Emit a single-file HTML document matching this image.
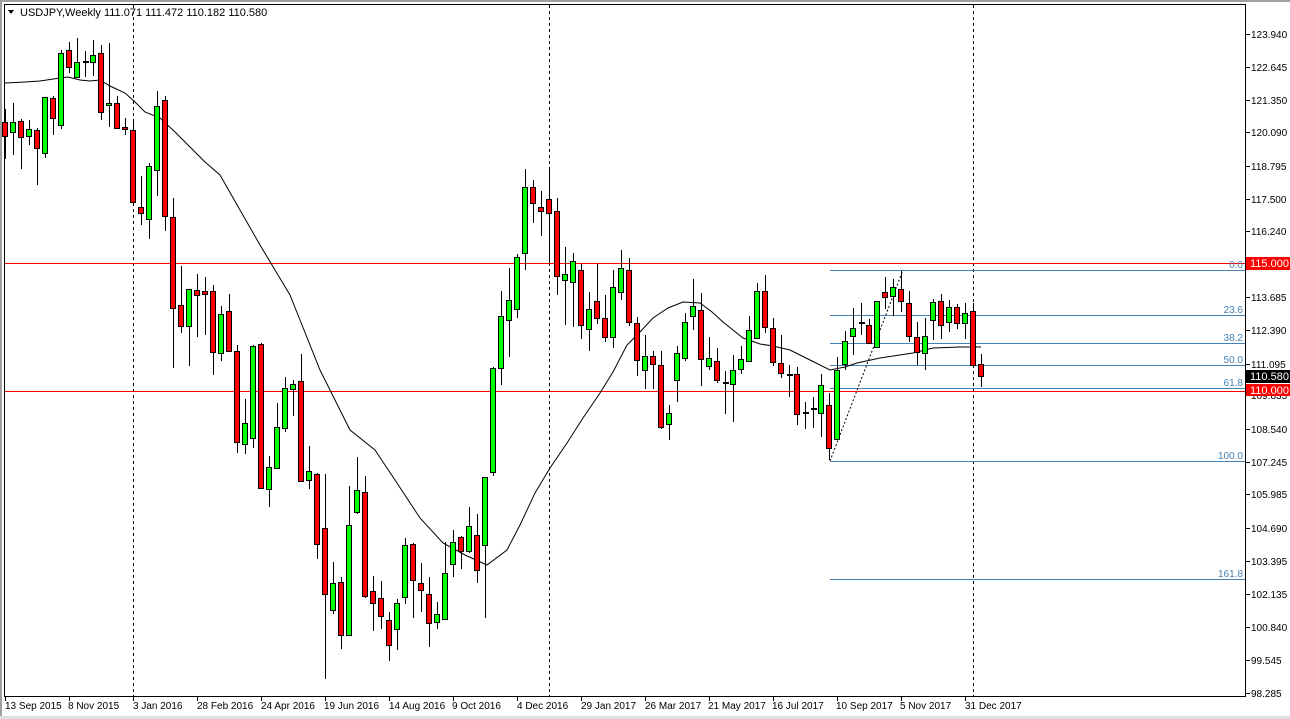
<!DOCTYPE html>
<html><head><meta charset="utf-8"><style>
html,body{margin:0;padding:0;background:#fff;width:1290px;height:719px;overflow:hidden}
svg{display:block}
text{font-family:"Liberation Sans",sans-serif;font-size:10px;fill:#000}
.g{fill:#00ff00;stroke:#000;stroke-width:1}
.r{fill:#ff0000;stroke:#000;stroke-width:1}
</style></head><body>
<svg width="1290" height="719" viewBox="0 0 1290 719" xmlns="http://www.w3.org/2000/svg" shape-rendering="crispEdges">
<rect x="0" y="0" width="1290" height="719" fill="#fff"/>
<rect x="0" y="0" width="1290" height="2" fill="#a0a0a0"/>
<rect x="0" y="0" width="2" height="719" fill="#a0a0a0"/>
<rect x="0" y="716" width="1290" height="3" fill="#e0e0e0"/>
<!-- frame -->
<path d="M4.5 4V696.5H1245.5V4M4 4.5H1245" fill="none" stroke="#000"/>
<!-- vertical dashed -->
<path d="M133.5 5V696M549.5 5V696M973.5 5V696" stroke="#000" stroke-dasharray="3,3"/>
<!-- red horizontals -->
<path d="M5 263.5H1245M5 391.5H1245" stroke="#ff0000"/>
<!-- fib -->
<path d="M830 270.5H1245M830 315.5H1245M830 343.5H1245M830 365.5H1245M830 388.5H1245M830 461.5H1245M830 579.5H1245" stroke="#4682b4"/>
<path d="M830 461L903 270" stroke="#000" stroke-dasharray="2,2" shape-rendering="auto"/>
<g style="fill:#4682b4;font-size:10px" text-anchor="end">
<text x="1243" y="268" style="fill:#4682b4">0.0</text>
<text x="1243" y="313" style="fill:#4682b4">23.6</text>
<text x="1243" y="341" style="fill:#4682b4">38.2</text>
<text x="1243" y="363" style="fill:#4682b4">50.0</text>
<text x="1243" y="386" style="fill:#4682b4">61.8</text>
<text x="1243" y="459" style="fill:#4682b4">100.0</text>
<text x="1243" y="577" style="fill:#4682b4">161.8</text>
</g>
<!-- MA -->
<polyline fill="none" stroke="#000" stroke-width="1" shape-rendering="auto" points="5,83 25,82 40,81 60,78 68,77 80,80 90,81 100,80 110,86 125,93 135,102 145,112 160,118 175,132 190,147 205,162 220,175 240,210 260,245 275,270 290,295 300,320 320,370 335,400 350,430 375,450 395,480 420,518 443,543 465,555 487,565 507,550 520,525 535,493 550,468 567,443 583,418 600,393 613,372 627,345 640,332 653,318 668,308 683,302 700,303 712,312 723,322 743,338 760,344 773,346 790,350 810,360 830,370 845,367 857,363 880,358 913,353 933,348 960,347 981,347"/>
<!-- wicks -->
<path stroke="#000" fill="none" d="M5.5 109V159M13.5 103V155M21.5 119V169M29.5 120V145M37.5 128V185M45.5 97V158M53.5 96V135M61.5 50V129M69.5 42V73M77.5 38V77M85.5 51V77M93.5 40V76M101.5 45V120M109.5 43V127M117.5 96V129M125.5 118V135M133.5 122V202M141.5 176V225M149.5 163V239M157.5 91V196M165.5 96V231M173.5 198V368M181.5 266V333M189.5 289V366M197.5 274V337M205.5 277V335M213.5 285V375M221.5 306V361M229.5 294V352M237.5 345V453M245.5 399V454M253.5 345V448M261.5 343V488M269.5 456V507M277.5 403V469M285.5 377V432M293.5 380V416M301.5 354V481M309.5 446V489M317.5 473V559M325.5 474V679M333.5 562V614M341.5 577V649M349.5 486V636M357.5 457V514M365.5 476V598M373.5 576V631M381.5 581V629M389.5 612V661M397.5 599V650M405.5 538V604M413.5 543V618M421.5 563V612M429.5 577V647M437.5 602V629M445.5 542V619M453.5 530V577M461.5 536V569M469.5 507V553M477.5 514V583M485.5 477V618M493.5 367V476M501.5 291V385M509.5 268V357M517.5 254V318M525.5 169V270M533.5 180V223M541.5 191V236M549.5 170V263M557.5 198V295M565.5 247V325M573.5 253V327M581.5 264V339M589.5 292V351M597.5 264V324M605.5 295V342M613.5 270V348M621.5 250V300M629.5 258V326M637.5 317V376M645.5 335V389M653.5 351V389M661.5 351V429M669.5 405V440M677.5 346V402M685.5 313V361M693.5 279V330M701.5 293V386M709.5 337V370M717.5 348V383M725.5 371V414M733.5 355V422M741.5 346V374M749.5 316V362M757.5 283V339M765.5 275V333M773.5 318V366M781.5 335V378M789.5 365V397M797.5 367V425M805.5 402V429M813.5 397V428M821.5 374V437M829.5 393V460M837.5 357V440M845.5 331V370M853.5 308V355M861.5 303V335M869.5 319V344M877.5 301V348M885.5 277V309M893.5 279V316M901.5 271V312M909.5 291V342M917.5 322V365M925.5 318V370M933.5 299V340M941.5 294V339M949.5 300V332M957.5 304V329M965.5 303V339M973.5 303V365M981.5 354V387"/>
<!-- doji -->
<path stroke="#000" stroke-width="2" d="M83 62H89M723 383H729M787 375H793M803 413H809M811 409H817M859 323H865"/>
<!-- bodies -->
<rect class="r" x="2.5" y="122.5" width="5" height="14"/>
<rect class="g" x="10.5" y="122.5" width="5" height="10"/>
<rect class="r" x="18.5" y="121.5" width="5" height="16"/>
<rect class="g" x="26.5" y="129.5" width="5" height="7"/>
<rect class="r" x="34.5" y="130.5" width="5" height="18"/>
<rect class="g" x="42.5" y="97.5" width="5" height="56"/>
<rect class="r" x="50.5" y="98.5" width="5" height="20"/>
<rect class="g" x="58.5" y="53.5" width="5" height="72"/>
<rect class="r" x="66.5" y="50.5" width="5" height="17"/>
<rect class="g" x="74.5" y="62.5" width="5" height="15"/>
<rect class="g" x="90.5" y="55.5" width="5" height="7"/>
<rect class="r" x="98.5" y="53.5" width="5" height="59"/>
<rect class="g" x="106.5" y="103.5" width="5" height="2"/>
<rect class="r" x="114.5" y="103.5" width="5" height="25"/>
<rect class="r" x="122.5" y="127.5" width="5" height="2"/>
<rect class="r" x="130.5" y="130.5" width="5" height="72"/>
<rect class="r" x="138.5" y="207.5" width="5" height="6"/>
<rect class="g" x="146.5" y="166.5" width="5" height="53"/>
<rect class="g" x="154.5" y="106.5" width="5" height="64"/>
<rect class="r" x="162.5" y="100.5" width="5" height="116"/>
<rect class="r" x="170.5" y="217.5" width="5" height="91"/>
<rect class="r" x="178.5" y="305.5" width="5" height="21"/>
<rect class="g" x="186.5" y="289.5" width="5" height="37"/>
<rect class="r" x="194.5" y="290.5" width="5" height="5"/>
<rect class="r" x="202.5" y="291.5" width="5" height="3"/>
<rect class="r" x="210.5" y="291.5" width="5" height="61"/>
<rect class="g" x="218.5" y="314.5" width="5" height="39"/>
<rect class="r" x="226.5" y="311.5" width="5" height="40"/>
<rect class="r" x="234.5" y="351.5" width="5" height="91"/>
<rect class="g" x="242.5" y="423.5" width="5" height="21"/>
<rect class="g" x="250.5" y="346.5" width="5" height="92"/>
<rect class="r" x="258.5" y="344.5" width="5" height="144"/>
<rect class="g" x="266.5" y="467.5" width="5" height="22"/>
<rect class="g" x="274.5" y="427.5" width="5" height="41"/>
<rect class="g" x="282.5" y="388.5" width="5" height="40"/>
<rect class="g" x="290.5" y="384.5" width="5" height="5"/>
<rect class="r" x="298.5" y="381.5" width="5" height="100"/>
<rect class="g" x="306.5" y="471.5" width="5" height="9"/>
<rect class="r" x="314.5" y="474.5" width="5" height="70"/>
<rect class="r" x="322.5" y="528.5" width="5" height="66"/>
<rect class="g" x="330.5" y="583.5" width="5" height="27"/>
<rect class="r" x="338.5" y="582.5" width="5" height="53"/>
<rect class="g" x="346.5" y="525.5" width="5" height="110"/>
<rect class="g" x="354.5" y="490.5" width="5" height="22"/>
<rect class="r" x="362.5" y="492.5" width="5" height="104"/>
<rect class="r" x="370.5" y="591.5" width="5" height="12"/>
<rect class="r" x="378.5" y="598.5" width="5" height="18"/>
<rect class="r" x="386.5" y="620.5" width="5" height="25"/>
<rect class="g" x="394.5" y="603.5" width="5" height="26"/>
<rect class="g" x="402.5" y="545.5" width="5" height="52"/>
<rect class="r" x="410.5" y="544.5" width="5" height="36"/>
<rect class="r" x="418.5" y="583.5" width="5" height="7"/>
<rect class="r" x="426.5" y="594.5" width="5" height="29"/>
<rect class="g" x="434.5" y="614.5" width="5" height="8"/>
<rect class="g" x="442.5" y="573.5" width="5" height="46"/>
<rect class="g" x="450.5" y="542.5" width="5" height="22"/>
<rect class="r" x="458.5" y="537.5" width="5" height="14"/>
<rect class="g" x="466.5" y="526.5" width="5" height="25"/>
<rect class="r" x="474.5" y="535.5" width="5" height="35"/>
<rect class="g" x="482.5" y="477.5" width="5" height="68"/>
<rect class="g" x="490.5" y="368.5" width="5" height="104"/>
<rect class="g" x="498.5" y="316.5" width="5" height="52"/>
<rect class="g" x="506.5" y="300.5" width="5" height="20"/>
<rect class="g" x="514.5" y="257.5" width="5" height="52"/>
<rect class="g" x="522.5" y="187.5" width="5" height="66"/>
<rect class="r" x="530.5" y="187.5" width="5" height="16"/>
<rect class="r" x="538.5" y="207.5" width="5" height="4"/>
<rect class="r" x="546.5" y="199.5" width="5" height="14"/>
<rect class="r" x="554.5" y="211.5" width="5" height="65"/>
<rect class="g" x="562.5" y="274.5" width="5" height="6"/>
<rect class="g" x="570.5" y="261.5" width="5" height="21"/>
<rect class="r" x="578.5" y="270.5" width="5" height="55"/>
<rect class="g" x="586.5" y="309.5" width="5" height="20"/>
<rect class="r" x="594.5" y="301.5" width="5" height="17"/>
<rect class="r" x="602.5" y="318.5" width="5" height="19"/>
<rect class="g" x="610.5" y="287.5" width="5" height="50"/>
<rect class="g" x="618.5" y="268.5" width="5" height="24"/>
<rect class="r" x="626.5" y="270.5" width="5" height="52"/>
<rect class="r" x="634.5" y="323.5" width="5" height="37"/>
<rect class="g" x="642.5" y="356.5" width="5" height="14"/>
<rect class="r" x="650.5" y="356.5" width="5" height="8"/>
<rect class="r" x="658.5" y="365.5" width="5" height="62"/>
<rect class="g" x="666.5" y="413.5" width="5" height="11"/>
<rect class="g" x="674.5" y="353.5" width="5" height="27"/>
<rect class="g" x="682.5" y="322.5" width="5" height="36"/>
<rect class="g" x="690.5" y="306.5" width="5" height="10"/>
<rect class="r" x="698.5" y="310.5" width="5" height="49"/>
<rect class="g" x="706.5" y="358.5" width="5" height="8"/>
<rect class="r" x="714.5" y="361.5" width="5" height="19"/>
<rect class="g" x="730.5" y="370.5" width="5" height="14"/>
<rect class="g" x="738.5" y="359.5" width="5" height="10"/>
<rect class="g" x="746.5" y="330.5" width="5" height="31"/>
<rect class="g" x="754.5" y="291.5" width="5" height="47"/>
<rect class="r" x="762.5" y="291.5" width="5" height="36"/>
<rect class="r" x="770.5" y="328.5" width="5" height="34"/>
<rect class="r" x="778.5" y="363.5" width="5" height="10"/>
<rect class="r" x="794.5" y="374.5" width="5" height="40"/>
<rect class="g" x="818.5" y="385.5" width="5" height="28"/>
<rect class="r" x="826.5" y="405.5" width="5" height="43"/>
<rect class="g" x="834.5" y="370.5" width="5" height="69"/>
<rect class="g" x="842.5" y="341.5" width="5" height="23"/>
<rect class="g" x="850.5" y="328.5" width="5" height="8"/>
<rect class="r" x="866.5" y="325.5" width="5" height="18"/>
<rect class="g" x="874.5" y="301.5" width="5" height="46"/>
<rect class="r" x="882.5" y="292.5" width="5" height="5"/>
<rect class="g" x="890.5" y="287.5" width="5" height="9"/>
<rect class="r" x="898.5" y="289.5" width="5" height="12"/>
<rect class="r" x="906.5" y="303.5" width="5" height="33"/>
<rect class="r" x="914.5" y="337.5" width="5" height="15"/>
<rect class="g" x="922.5" y="336.5" width="5" height="17"/>
<rect class="g" x="930.5" y="302.5" width="5" height="18"/>
<rect class="r" x="938.5" y="301.5" width="5" height="24"/>
<rect class="g" x="946.5" y="307.5" width="5" height="15"/>
<rect class="r" x="954.5" y="307.5" width="5" height="16"/>
<rect class="g" x="962.5" y="313.5" width="5" height="10"/>
<rect class="r" x="970.5" y="311.5" width="5" height="54"/>
<rect class="r" x="978.5" y="364.5" width="5" height="12"/>
<!-- legend -->
<path d="M8 10H14L11 14Z" fill="#000"/>
<text x="20" y="16" style="font-size:11px">USDJPY,Weekly  111.071 111.472 110.182 110.580</text>
<!-- price axis -->
<path stroke="#000" d="M1246 34.5H1250M1246 67.5H1250M1246 100.5H1250M1246 132.5H1250M1246 166.5H1250M1246 199.5H1250M1246 231.5H1250M1246 297.5H1250M1246 330.5H1250M1246 364.5H1250M1246 429.5H1250M1246 462.5H1250M1246 494.5H1250M1246 528.5H1250M1246 561.5H1250M1246 594.5H1250M1246 627.5H1250M1246 660.5H1250M1246 693.5H1250"/>
<g>
<text x="1251" y="38">123.940</text>
<text x="1251" y="71">122.645</text>
<text x="1251" y="104">121.350</text>
<text x="1251" y="136">120.090</text>
<text x="1251" y="170">118.795</text>
<text x="1251" y="203">117.500</text>
<text x="1251" y="235">116.240</text>
<text x="1251" y="301">113.685</text>
<text x="1251" y="334">112.390</text>
<text x="1251" y="368">111.095</text>
<text x="1251" y="399">109.835</text>
<text x="1251" y="433">108.540</text>
<text x="1251" y="466">107.245</text>
<text x="1251" y="498">105.985</text>
<text x="1251" y="532">104.690</text>
<text x="1251" y="565">103.395</text>
<text x="1251" y="598">102.135</text>
<text x="1251" y="631">100.840</text>
<text x="1251" y="664">99.545</text>
<text x="1251" y="697">98.285</text>
</g>
<rect x="1246" y="257" width="44" height="13" fill="#ff0000"/>
<text x="1250" y="267" style="fill:#fff;font-size:11px">115.000</text>
<rect x="1246" y="370" width="44" height="13" fill="#000"/>
<text x="1250" y="380" style="fill:#fff;font-size:11px">110.580</text>
<rect x="1246" y="384" width="44" height="12" fill="#ff0000"/>
<text x="1250" y="394" style="fill:#fff;font-size:11px">110.000</text>
<!-- time axis -->
<path stroke="#000" d="M5.5 697V701M69.5 697V701M133.5 697V701M197.5 697V701M261.5 697V701M325.5 697V701M389.5 697V701M453.5 697V701M517.5 697V701M581.5 697V701M645.5 697V701M709.5 697V701M773.5 697V701M837.5 697V701M901.5 697V701M965.5 697V701"/>
<g>
<text x="5" y="709">13 Sep 2015</text>
<text x="68" y="709">8 Nov 2015</text>
<text x="133" y="709">3 Jan 2016</text>
<text x="197" y="709">28 Feb 2016</text>
<text x="261" y="709">24 Apr 2016</text>
<text x="324" y="709">19 Jun 2016</text>
<text x="389" y="709">14 Aug 2016</text>
<text x="452" y="709">9 Oct 2016</text>
<text x="517" y="709">4 Dec 2016</text>
<text x="581" y="709">29 Jan 2017</text>
<text x="645" y="709">26 Mar 2017</text>
<text x="708" y="709">21 May 2017</text>
<text x="772" y="709">16 Jul 2017</text>
<text x="836" y="709">10 Sep 2017</text>
<text x="900" y="709">5 Nov 2017</text>
<text x="965" y="709">31 Dec 2017</text>
</g>
</svg>
</body></html>
